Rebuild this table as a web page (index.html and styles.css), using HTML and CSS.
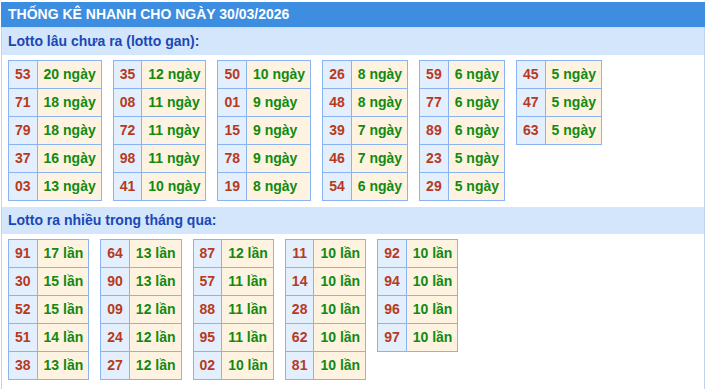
FILE: index.html
```html
<!DOCTYPE html>
<html lang="vi">
<head>
<meta charset="utf-8">
<title>Thống kê nhanh</title>
<link rel="stylesheet" href="styles.css">
</head>
<body>
<div class="box">
  <div class="title">THỐNG KÊ NHANH CHO NGÀY 30/03/2026</div>
  <div class="panel">
    <div class="sec first">Lotto lâu chưa ra (lotto gan):</div>
    <div class="tables">
      <table><tr><td class="n">53</td><td class="v">20 ngày</td></tr><tr><td class="n">71</td><td class="v">18 ngày</td></tr><tr><td class="n">79</td><td class="v">18 ngày</td></tr><tr><td class="n">37</td><td class="v">16 ngày</td></tr><tr><td class="n">03</td><td class="v">13 ngày</td></tr></table>
      <table><tr><td class="n">35</td><td class="v">12 ngày</td></tr><tr><td class="n">08</td><td class="v">11 ngày</td></tr><tr><td class="n">72</td><td class="v">11 ngày</td></tr><tr><td class="n">98</td><td class="v">11 ngày</td></tr><tr><td class="n">41</td><td class="v">10 ngày</td></tr></table>
      <table><tr><td class="n">50</td><td class="v">10 ngày</td></tr><tr><td class="n">01</td><td class="v">9 ngày</td></tr><tr><td class="n">15</td><td class="v">9 ngày</td></tr><tr><td class="n">78</td><td class="v">9 ngày</td></tr><tr><td class="n">19</td><td class="v">8 ngày</td></tr></table>
      <table><tr><td class="n">26</td><td class="v">8 ngày</td></tr><tr><td class="n">48</td><td class="v">8 ngày</td></tr><tr><td class="n">39</td><td class="v">7 ngày</td></tr><tr><td class="n">46</td><td class="v">7 ngày</td></tr><tr><td class="n">54</td><td class="v">6 ngày</td></tr></table>
      <table><tr><td class="n">59</td><td class="v">6 ngày</td></tr><tr><td class="n">77</td><td class="v">6 ngày</td></tr><tr><td class="n">89</td><td class="v">6 ngày</td></tr><tr><td class="n">23</td><td class="v">5 ngày</td></tr><tr><td class="n">29</td><td class="v">5 ngày</td></tr></table>
      <table><tr><td class="n">45</td><td class="v">5 ngày</td></tr><tr><td class="n">47</td><td class="v">5 ngày</td></tr><tr><td class="n">63</td><td class="v">5 ngày</td></tr></table>
    </div>
    <div class="sec">Lotto ra nhiều trong tháng qua:</div>
    <div class="tables">
      <table><tr><td class="n">91</td><td class="v">17 lần</td></tr><tr><td class="n">30</td><td class="v">15 lần</td></tr><tr><td class="n">52</td><td class="v">15 lần</td></tr><tr><td class="n">51</td><td class="v">14 lần</td></tr><tr><td class="n">38</td><td class="v">13 lần</td></tr></table>
      <table><tr><td class="n">64</td><td class="v">13 lần</td></tr><tr><td class="n">90</td><td class="v">13 lần</td></tr><tr><td class="n">09</td><td class="v">12 lần</td></tr><tr><td class="n">24</td><td class="v">12 lần</td></tr><tr><td class="n">27</td><td class="v">12 lần</td></tr></table>
      <table><tr><td class="n">87</td><td class="v">12 lần</td></tr><tr><td class="n">57</td><td class="v">11 lần</td></tr><tr><td class="n">88</td><td class="v">11 lần</td></tr><tr><td class="n">95</td><td class="v">11 lần</td></tr><tr><td class="n">02</td><td class="v">10 lần</td></tr></table>
      <table><tr><td class="n">11</td><td class="v">10 lần</td></tr><tr><td class="n">14</td><td class="v">10 lần</td></tr><tr><td class="n">28</td><td class="v">10 lần</td></tr><tr><td class="n">62</td><td class="v">10 lần</td></tr><tr><td class="n">81</td><td class="v">10 lần</td></tr></table>
      <table><tr><td class="n">92</td><td class="v">10 lần</td></tr><tr><td class="n">94</td><td class="v">10 lần</td></tr><tr><td class="n">96</td><td class="v">10 lần</td></tr><tr><td class="n">97</td><td class="v">10 lần</td></tr></table>
    </div>
  </div>
</div>
</body>
</html>
```

FILE: styles.css
```css
html, body {
  margin: 0;
  padding: 0;
  background: #ffffff;
}
body {
  font-family: "Liberation Sans", Arial, sans-serif;
  font-size: 14px;
  font-weight: bold;
}
.box {
  margin: 2px 0 0 1px;
  width: 704px;
}
.title {
  height: 25px;
  line-height: 25px;
  background: #3d8de0;
  color: #ffffff;
  padding-left: 7px;
  font-size: 14px;
}
.panel {
  border-left: 1px solid #c2d3e9;
  border-right: 1px solid #c2d3e9;
  padding-bottom: 30px;
}
.sec {
  height: 27px;
  line-height: 27px;
  background: #d4e6fb;
  color: #1a48b6;
  padding-left: 6px;
}
.sec.first {
  border-top: 1px solid #c9dcf2;
}
.tables {
  display: flex;
  align-items: flex-start;
  gap: 11px;
  padding: 5px 6px 6px 6px;
}
table {
  border-collapse: collapse;
  border: 1px solid #8ab3f3;
}
td {
  border: 1px solid #8ab3f3;
  height: 27px;
  line-height: 27px;
  padding: 0 6px;
  box-sizing: border-box;
  white-space: nowrap;
}
td.n {
  background: #e3effd;
  color: #b83a1c;
  text-align: center;
}
td.v {
  background: #fef3e1;
  color: #128a10;
  padding: 0 5px 0 6px;
}
```
